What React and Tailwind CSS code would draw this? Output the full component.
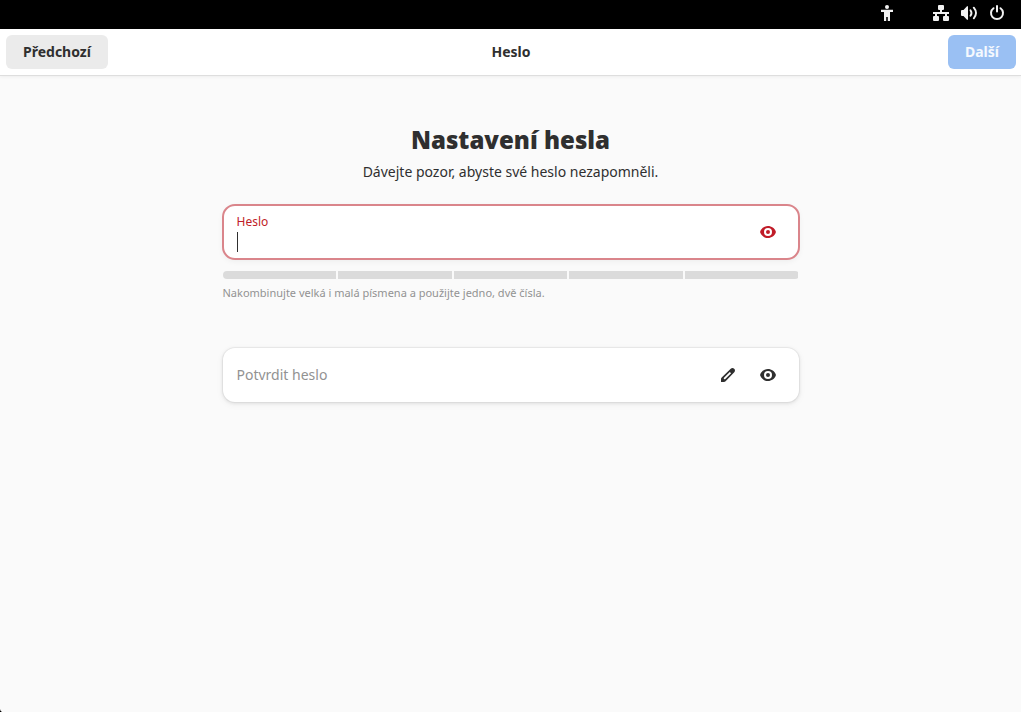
import React from "react";

function AccessibilityIcon() {
  return (
    <svg width="16" height="16" viewBox="0 0 16 16" fill="currentColor" aria-hidden="true">
      <circle cx="8" cy="2" r="2" />
      <path d="M2 4.800h12v2.200h-3v9H8.800v-4H7.200v4H5V7H2z" />
    </svg>
  );
}

function NetworkIcon() {
  return (
    <svg width="16" height="16" viewBox="0 0 16 16" fill="currentColor" aria-hidden="true">
      <path d="M6 0h4a1 1 0 0 1 1 1v3a1 1 0 0 1-1 1H9v2h7v2h-2v2h1a1 1 0 0 1 1 1v3a1 1 0 0 1-1 1h-4a1 1 0 0 1-1-1v-3a1 1 0 0 1 1-1h1V9H4v2h1a1 1 0 0 1 1 1v3a1 1 0 0 1-1 1H1a1 1 0 0 1-1-1v-3a1 1 0 0 1 1-1h1V9H0V7h7V5H6a1 1 0 0 1-1-1V1a1 1 0 0 1 1-1z" />
    </svg>
  );
}

function VolumeIcon() {
  return (
    <svg width="16" height="16" viewBox="0 0 16 16" fill="currentColor" aria-hidden="true">
      <path d="M0 6a1 1 0 0 1 1-1h1.500L6 1.300h1v13.400H6L2.500 11H1a1 1 0 0 1-1-1z" />
      <path d="M9.500 5.200q2 2.800 0 5.600" fill="none" stroke="currentColor" strokeWidth="1.900" strokeLinecap="round" />
      <path d="M12.800 2.700q4.400 5.300 0 10.600" fill="none" stroke="currentColor" strokeWidth="1.900" strokeLinecap="round" />
    </svg>
  );
}

function PowerIcon() {
  return (
    <svg width="16" height="16" viewBox="0 0 16 16" fill="none" stroke="currentColor" strokeWidth="2" strokeLinecap="round" aria-hidden="true">
      <path d="M8 1v5.500" />
      <path d="M4.500 3.200a6 6 0 1 0 7 0" />
    </svg>
  );
}

function EyeIcon() {
  return (
    <svg width="16" height="16" viewBox="0 0 16 16" fill="currentColor" aria-hidden="true">
      <path
        fillRule="evenodd"
        d="M8 2C4.500 2 1.300 4.300.2 7.500a1.500 1.500 0 0 0 0 1C1.300 11.700 4.500 14 8 14s6.700-2.300 7.800-5.500a1.500 1.500 0 0 0 0-1C14.700 4.300 11.500 2 8 2zm0 2a4 4 0 1 1 0 8 4 4 0 0 1 0-8zm0 2a2 2 0 1 0 0 4 2 2 0 0 0 0-4z"
      />
    </svg>
  );
}

function PencilIcon() {
  return (
    <svg width="16" height="16" viewBox="0 0 16 16" fill="currentColor" aria-hidden="true">
      <path
        fillRule="evenodd"
        d="M12.500 1a2.500 2.500 0 0 0-1.770.73L1.700 10.400a2.400 2.400 0 0 0-.7 1.700V15h2.900c.64 0 1.250-.25 1.700-.7l8.670-9.030A2.500 2.500 0 0 0 12.500 1zM9.800 4.900l1.300 1.300-5.800 5.800a.92.920 0 0 1-1.300-1.300z"
      />
    </svg>
  );
}

export default function App() {
  return (
    <div className="relative flex min-h-screen flex-col bg-[#fafafa] font-['Noto_Sans',sans-serif] text-sm text-[#2f2f2f]">
      <div className="flex h-[29px] items-start justify-end bg-black px-4 pt-[5px] text-[#f2f2f2]">
        <div className="mr-[38px]">
          <AccessibilityIcon />
        </div>
        <div className="flex gap-3">
          <NetworkIcon />
          <VolumeIcon />
          <PowerIcon />
        </div>
      </div>

      <header className="grid grid-cols-[1fr_auto_1fr] items-center bg-white py-[6px] pr-[5px] pl-[6px] shadow-[0_1px_0_#dedede,0_2px_3px_rgba(0,0,0,0.05)]">
        <button type="button" className="h-[34px] justify-self-start rounded-md bg-[#ebebeb] px-[17px] font-bold">
          Předchozí
        </button>
        <h2 className="font-bold">Heslo</h2>
        <button type="button" disabled className="h-[34px] justify-self-end rounded-md bg-[#9ac0f3] px-[17px] font-bold text-white/90">
          Další
        </button>
      </header>

      <main className="mx-auto w-full max-w-[576px] pt-[47px]">
        <h1 className="text-center text-2xl leading-9 font-black">Nastavení hesla</h1>
        <p className="mt-1 text-center leading-5">Dávejte pozor, abyste své heslo nezapomněli.</p>

        <div className="mt-[23px] flex h-[54px] items-center rounded-xl bg-white pr-[23px] pl-[14px] text-[#c01c28] shadow-[0_2px_6px_rgba(0,0,0,0.06)] outline-2 -outline-offset-1 outline-[#da858b]">
          <div className="flex flex-1 flex-col gap-0.5 pt-0.5">
            <label htmlFor="password" className="text-xs leading-4">
              Heslo
            </label>
            <div className="flex h-5 items-center">
              <span className="h-5 w-px bg-[#2f2f2f]" />
              <input id="password" type="password" className="w-full bg-transparent text-[#2f2f2f] outline-none" />
            </div>
          </div>
          <button type="button" aria-label="Zobrazit heslo">
            <EyeIcon />
          </button>
        </div>

        <div className="mt-3 grid h-2 grid-cols-5 gap-[2px] overflow-hidden rounded-full">
          <span className="bg-[#dbdbdb]" />
          <span className="bg-[#dbdbdb]" />
          <span className="bg-[#dbdbdb]" />
          <span className="bg-[#dbdbdb]" />
          <span className="bg-[#dbdbdb]" />
        </div>
        <p className="mt-[6px] text-[11px] leading-4 text-[#929292]">
          Nakombinujte velká i malá písmena a použijte jedno, dvě čísla.
        </p>

        <div className="mt-[47px] flex h-[54px] items-center gap-6 rounded-xl bg-white pr-[23px] pl-[14px] shadow-[0_0_0_1px_rgba(0,0,0,0.04),0_1px_3px_1px_rgba(0,0,0,0.07),0_2px_6px_2px_rgba(0,0,0,0.03)]">
          <input
            type="password"
            aria-label="Potvrdit heslo"
            placeholder="Potvrdit heslo"
            className="min-w-0 flex-1 bg-transparent outline-none placeholder:text-[#929292]"
          />
          <PencilIcon />
          <button type="button" aria-label="Zobrazit potvrzení hesla">
            <EyeIcon />
          </button>
        </div>
      </main>

      <svg className="absolute bottom-0 left-0" width="2" height="3" viewBox="0 0 2 3" aria-hidden="true">
        <path d="M0 0q0 2 2 3H0z" fill="#000" />
      </svg>
    </div>
  );
}
